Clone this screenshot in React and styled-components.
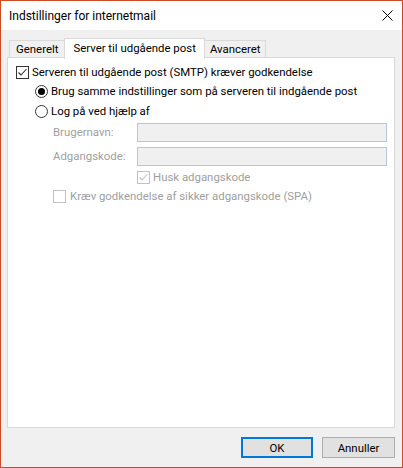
import React from 'react';
import styled, { createGlobalStyle } from 'styled-components';

const GlobalStyle = createGlobalStyle`
  html, body {
    margin: 0;
    padding: 0;
    background: #ffffff;
  }
  * {
    box-sizing: border-box;
  }
`;

const Window = styled.div`
  width: 403px;
  height: 468px;
  border: 1px solid #cc4b25;
  background: #f0f0f0;
  display: flex;
  flex-direction: column;
  font-family: Roboto, 'Noto Sans', 'Liberation Sans', sans-serif;
  font-size: 11.4px;
  color: #000;
`;

const TitleBar = styled.div`
  height: 29px;
  background: #ffffff;
  display: flex;
  align-items: center;
  justify-content: space-between;
  padding: 0 9px 0 8px;
  flex-shrink: 0;
`;

const Title = styled.span`
  font-size: 12px;
  line-height: 1;
`;

const CloseButton = styled.button`
  border: 0;
  background: transparent;
  padding: 0;
  width: 12px;
  height: 12px;
  display: flex;
  align-items: center;
  justify-content: center;
`;

const Body = styled.div`
  flex: 1;
  display: flex;
  flex-direction: column;
  padding: 8px 7px 0 6px;
`;

const TabStrip = styled.div`
  display: flex;
  align-items: flex-end;
  height: 20px;
  padding-left: 2px;
  position: relative;
  z-index: 1;
`;

const Tab = styled.div`
  height: ${({ $selected }) => ($selected ? '21px' : '18px')};
  margin-bottom: ${({ $selected }) => ($selected ? '-1px' : '0')};
  padding: 0 ${({ $pad }) => $pad}px;
  padding-bottom: ${({ $selected }) => ($selected ? '2px' : '0')};
  border: 1px solid #d9d9d9;
  border-bottom: ${({ $selected }) => ($selected ? '0' : '1px solid #d9d9d9')};
  margin-right: -1px;
  background: ${({ $selected }) => ($selected ? '#ffffff' : '#f0f0f0')};
  display: flex;
  align-items: center;
  white-space: nowrap;
  position: relative;
  z-index: ${({ $selected }) => ($selected ? 2 : 1)};
`;

const Panel = styled.div`
  height: 371px;
  margin-top: -1px;
  background: #ffffff;
  border: 1px solid #d9d9d9;
  padding: 8px 7px 0 8px;
  display: flex;
  flex-direction: column;
`;

const Row = styled.div`
  display: flex;
  align-items: center;
  height: ${({ $height }) => $height || 13}px;
  margin-top: ${({ $gap }) => $gap || 0}px;
  padding-left: ${({ $indent }) => $indent || 0}px;
  color: ${({ $disabled }) => ($disabled ? '#a0a0a0' : '#000')};
  white-space: nowrap;
`;

const Label = styled.span`
  margin-left: ${({ $space }) => ($space == null ? 3 : $space)}px;
  line-height: 1;
`;

const FieldLabel = styled.span`
  width: 84px;
  flex-shrink: 0;
  line-height: 1;
`;

const TextBox = styled.div`
  flex: 1;
  align-self: stretch;
  background: #f0f0f0;
  border: 1px solid #b7c6d8;
`;

const Box = styled.span`
  width: 13px;
  height: 13px;
  flex-shrink: 0;
  border: 1px solid ${({ $disabled }) => ($disabled ? '#c2c2c2' : '#333333')};
  background: #ffffff;
  display: flex;
  align-items: center;
  justify-content: center;
`;

const Radio = styled.span`
  width: 13px;
  height: 13px;
  flex-shrink: 0;
  border-radius: 50%;
  border: 1px solid #333333;
  background: #ffffff;
  display: flex;
  align-items: center;
  justify-content: center;

  &::after {
    content: '';
    width: 7px;
    height: 7px;
    border-radius: 50%;
    background: #000000;
    display: ${({ $checked }) => ($checked ? 'block' : 'none')};
  }
`;

const Footer = styled.div`
  display: flex;
  justify-content: flex-end;
  gap: 9px;
  padding: 9px 0 0 0;
`;

const Button = styled.button`
  width: ${({ $width }) => $width}px;
  height: 21px;
  background: #e1e1e1;
  border: ${({ $default }) => ($default ? '2px solid #0078d7' : '1px solid #adadad')};
  font-family: inherit;
  font-size: 11.4px;
  color: #000;
  padding: 0;
  display: flex;
  align-items: center;
  justify-content: center;
`;

const Check = ({ checked, disabled }) => (
  <Box $disabled={disabled}>
    {checked && (
      <svg width="11" height="11" viewBox="0 0 11 11">
        <path
          d="M1.5 5.5 L4 8 L9.5 2"
          fill="none"
          stroke={disabled ? '#c2c2c2' : '#333333'}
          strokeWidth="1.1"
        />
      </svg>
    )}
  </Box>
);

const CloseIcon = () => (
  <svg width="11" height="11" viewBox="0 0 11 11">
    <path d="M0.5 0.5 L10.5 10.5 M10.5 0.5 L0.5 10.5" stroke="#000" strokeWidth="1" />
  </svg>
);

export default function App() {
  return (
    <>
      <GlobalStyle />
      <Window>
        <TitleBar>
          <Title>Indstillinger for internetmail</Title>
          <CloseButton>
            <CloseIcon />
          </CloseButton>
        </TitleBar>
        <Body>
          <TabStrip>
            <Tab $pad={6}>Generelt</Tab>
            <Tab $pad={8} $selected>Server til udgående post</Tab>
            <Tab $pad={5}>Avanceret</Tab>
          </TabStrip>
          <Panel>
            <Row>
              <Check checked />
              <Label>Serveren til udgående post (SMTP) kræver godkendelse</Label>
            </Row>
            <Row $gap={6} $indent={19}>
              <Radio $checked />
              <Label>Brug samme indstillinger som på serveren til indgående post</Label>
            </Row>
            <Row $gap={7} $indent={19}>
              <Radio />
              <Label>Log på ved hjælp af</Label>
            </Row>
            <Row $gap={5} $indent={37} $height={19} $disabled>
              <FieldLabel>Brugernavn:</FieldLabel>
              <TextBox />
            </Row>
            <Row $gap={5} $indent={37} $height={19} $disabled>
              <FieldLabel>Adgangskode:</FieldLabel>
              <TextBox />
            </Row>
            <Row $gap={5} $indent={121} $disabled>
              <Check checked disabled />
              <Label>Husk adgangskode</Label>
            </Row>
            <Row $gap={6} $indent={37} $disabled>
              <Check disabled />
              <Label $space={4}>Kræv godkendelse af sikker adgangskode (SPA)</Label>
            </Row>
          </Panel>
          <Footer>
            <Button $default $width={72}>OK</Button>
            <Button $width={73}>Annuller</Button>
          </Footer>
        </Body>
      </Window>
    </>
  );
}
